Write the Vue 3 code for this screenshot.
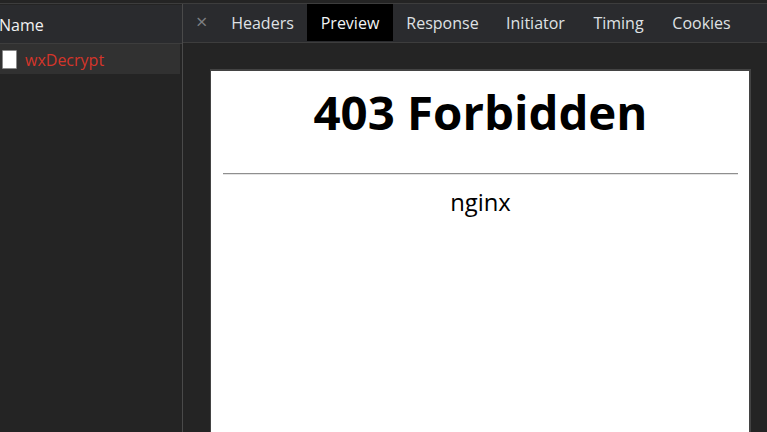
<script setup>
const tabs = [
  { label: 'Headers', width: 89 },
  { label: 'Preview', width: 86 },
  { label: 'Response', width: 99 },
  { label: 'Initiator', width: 87 },
  { label: 'Timing', width: 79 },
  { label: 'Cookies', width: 87 },
]
const ticks = [1, 2, 3, 4, 5, 6, 7]
</script>

<template>
  <div class="page">
    <div class="ruler">
      <span v-for="t in ticks" :key="t" class="tick"></span>
    </div>
    <div class="main">
      <aside class="side">
        <div class="side-head">Name</div>
        <div class="row">
          <span class="check"></span>
          <span class="req">wxDecrypt</span>
        </div>
      </aside>
      <section class="detail">
        <nav class="tabs">
          <span class="close">×</span>
          <span
            v-for="t in tabs"
            :key="t.label"
            class="tab"
            :class="{ active: t.label === 'Preview' }"
            :style="{ width: t.width + 'px' }"
          >{{ t.label }}</span>
        </nav>
        <div class="preview">
          <div class="doc">
            <h1>403 Forbidden</h1>
            <hr />
            <p>nginx</p>
          </div>
        </div>
      </section>
    </div>
  </div>
</template>

<style>
html, body { margin: 0; background: #242424; overflow: hidden; }
</style>

<style scoped>
.page {
  width: 767px;
  height: 432px;
  display: flex;
  flex-direction: column;
  overflow: hidden;
  background: #242424;
  font-family: "Open Sans", "Noto Sans", sans-serif;
  color: #e8eaed;
}
.ruler {
  height: 3px;
  flex: none;
  display: flex;
  padding-left: 112px;
  gap: 120.5px;
  border-bottom: 1px solid #3d3d3d;
  background: #242424;
}
.tick {
  width: 1px;
  height: 3px;
  background: #3d3d3d;
}
.main { flex: 1; display: flex; min-height: 0; }
.side {
  width: 182px;
  flex: none;
  border-right: 1px solid #4a4a4a;
  background: #242424;
}
.side-head {
  height: 40px;
  box-sizing: border-box;
  background: #2a2b2e;
  border-top: 1px solid #242424;
  border-bottom: 1px solid #3d3d3d;
  font-size: 16px;
  line-height: 40px;
  color: #f1f1f1;
  text-indent: -1px;
}
.row {
  height: 30px;
  margin-right: 2px;
  display: flex;
  align-items: center;
  background: #313131;
}
.check {
  width: 13px;
  height: 17px;
  margin-left: 2px;
  background: #fff;
  border: 1px solid #8a8a8a;
  border-radius: 1px;
  flex: none;
}
.req {
  margin-left: 8px;
  padding-top: 2px;
  font-size: 16px;
  color: #d5352a;
}
.detail { flex: 1; display: flex; flex-direction: column; min-width: 0; }
.tabs {
  height: 39px;
  flex: none;
  box-sizing: border-box;
  display: flex;
  align-items: flex-start;
  background: #2a2b2e;
  border-bottom: 1px solid #3d3d3d;
  font-size: 16px;
  color: #dfe1e4;
}
.close {
  width: 35px;
  padding-left: 13px;
  box-sizing: border-box;
  color: #7d7f82;
  font-size: 20px;
  line-height: 36px;
}
.tab {
  height: 37px;
  flex: none;
  text-align: center;
  line-height: 38px;
  white-space: nowrap;
}
.tab.active { background: #000; color: #f1f3f4; }
.preview {
  flex: 1;
  padding: 26px 16px 0 27px;
  min-height: 0;
  overflow: hidden;
}
.doc {
  height: 400px;
  box-sizing: border-box;
  background: #fff;
  border: 2px solid #434343;
  border-left-width: 1px;
  border-bottom: 0;
  padding: 0 11px 0 12px;
  color: #000;
  text-align: center;
}
h1 {
  margin: 0;
  padding-top: 9px;
  font-size: 47.4px;
  line-height: 64px;
  font-weight: 700;
}
hr {
  margin: 29px 0 0;
  height: 0;
  border: 0;
  border-top: 1px solid #8f8f8f;
  border-bottom: 1px solid #e4e4e4;
}
p {
  margin: 0;
  padding-top: 10px;
  font-size: 23.8px;
  line-height: 34px;
}
</style>
